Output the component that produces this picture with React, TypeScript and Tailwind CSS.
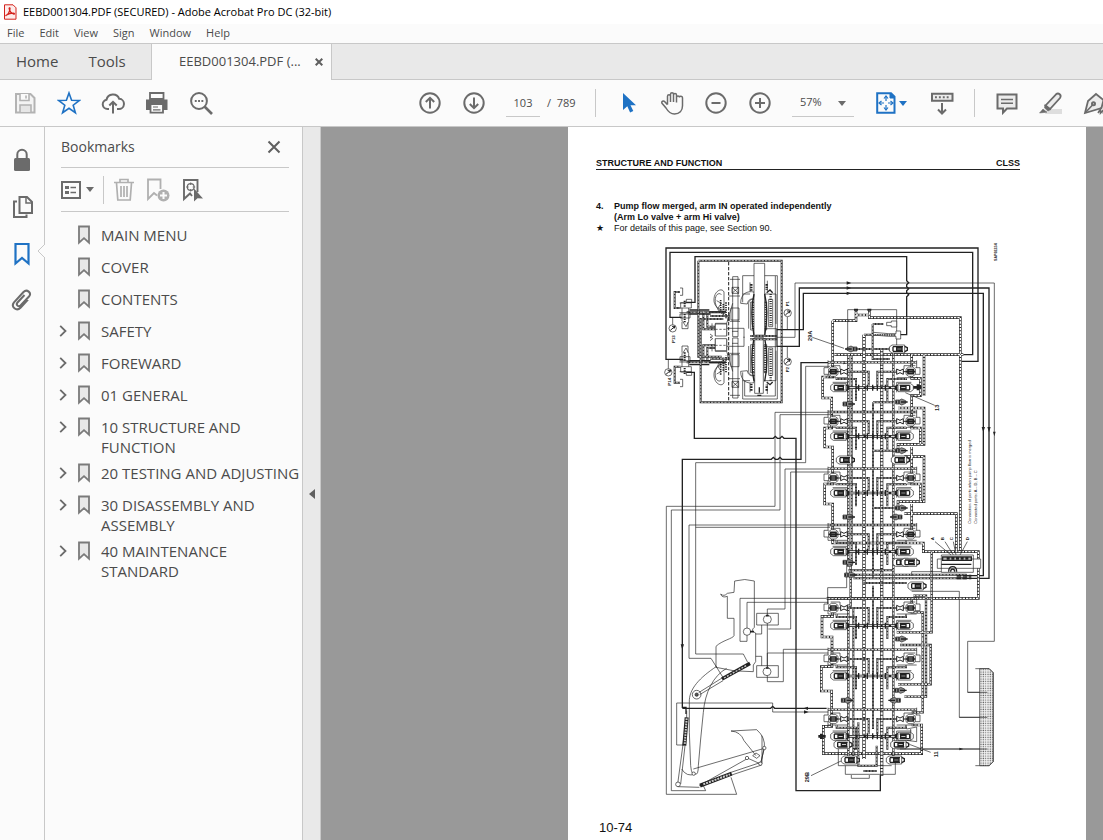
import { useState } from "react";
import type { ReactNode } from "react";

const MENUS = ["File", "Edit", "View", "Sign", "Window", "Help"];

const BOOKMARKS = [
    { title: "MAIN MENU", children: false },
    { title: "COVER", children: false },
    { title: "CONTENTS", children: false },
    { title: "SAFETY", children: true },
    { title: "FOREWARD", children: true },
    { title: "01 GENERAL", children: true },
    { title: "10 STRUCTURE AND FUNCTION", children: true },
    { title: "20 TESTING AND ADJUSTING", children: true },
    { title: "30 DISASSEMBLY AND ASSEMBLY", children: true },
    { title: "40 MAINTENANCE STANDARD", children: true },
];

function Icon({ children, className = "size-6 text-[#6b6b6b]" }: { children: ReactNode; className?: string }) {
    return (
        <svg viewBox="0 0 24 24" fill="none" stroke="currentColor" strokeWidth="2" className={`shrink-0 ${className}`} aria-hidden="true">
            {children}
        </svg>
    );
}

function ToolButton({ label, children }: { label: string; children: ReactNode }) {
    return (
        <button type="button" aria-label={label} className="flex size-8 shrink-0 items-center justify-center">
            {children}
        </button>
    );
}

function Caret({ className }: { className: string }) {
    return (
        <svg viewBox="0 0 8 5" className={`h-[5px] w-2 shrink-0 ${className}`} fill="currentColor" aria-hidden="true">
            <path d="M0 0h8L4 5z" />
        </svg>
    );
}

function Divider() {
    return <span className="h-7 w-px shrink-0 bg-[#c8c8c8]" />;
}

function TitleBar() {
    return (
        <header className="bg-white">
            <div className="flex h-6 items-center gap-[6px] pl-[3px] text-[11px] text-black">
                <svg viewBox="0 0 14 16" className="h-4 w-[14px]" fill="none" stroke="#d3221c" aria-hidden="true">
                    <path d="M1.500.8h8.500l3 3v11.400H1.500z" fill="#fdeceb" />
                    <path d="M3 11.500c2-.6 4-4.500 4-7 0-1-1-1-.8.200.5 2.600 2.400 4.800 4.600 5.300 1 .2.800-.9-.5-.9-2.500 0-5 .8-6.800 1.900-.8.500-.8.700-.5.500z" strokeWidth="1.300" />
                </svg>
                <h1>EEBD001304.PDF (SECURED) - Adobe Acrobat Pro DC (32-bit)</h1>
            </div>
            <nav className="flex h-[19px] items-center gap-[15px] bg-[#fbfbfb] pl-[7px] text-[11px] text-[#4b4b4b]">
                {MENUS.map((menu) => (
                    <button type="button" key={menu}>
                        {menu}
                    </button>
                ))}
            </nav>
        </header>
    );
}

function TabBar() {
    return (
        <div className="flex h-[37px] border-t border-[#c8c8c8] bg-[#e9e9e9] text-[#4b4b4b]">
            <div className="flex w-[152px] items-center gap-[30px] border-r border-b border-[#c8c8c8] pl-4 text-[15px]">
                <button type="button">Home</button>
                <button type="button">Tools</button>
            </div>
            <div className="flex w-[180px] items-center justify-between border-r border-[#c8c8c8] bg-[#fbfbfb] pr-2 pl-[27px]">
                <button type="button" className="text-[13px]">
                    EEBD001304.PDF (...
                </button>
                <button type="button" aria-label="Close tab">
                    <svg viewBox="0 0 8 8" className="size-2" stroke="#5f5f5f" strokeWidth="2" aria-hidden="true">
                        <path d="M.7.7l6.600 6.600M7.300.7L.7 7.300" />
                    </svg>
                </button>
            </div>
            <div className="flex-1 border-b border-[#c8c8c8]" />
        </div>
    );
}

function Toolbar() {
    const [page, setPage] = useState("103");

    return (
        <div className="flex h-[47px] items-center overflow-hidden border-b border-[#c8c8c8] bg-[#fbfbfb] pl-[9px] text-[11px] text-[#4b4b4b]">
            <div className="flex gap-3">
                <ToolButton label="Save">
                    <Icon className="size-6 text-[#b3b3b3]">
                        <path d="M3 3h14.500L21.500 7v14.500H3z" fill="#f4f4f4" />
                        <path d="M7 3v6.500h9V3M13 4.500v3" fill="#fbfbfb" strokeWidth="1.600" />
                        <path d="M7 21v-7h11v7" fill="#e6e6e6" strokeWidth="1.600" />
                    </Icon>
                </ToolButton>
                <ToolButton label="Star">
                    <Icon className="size-6 text-[#1f72c4]">
                        <path d="M12 2l2.600 7.300 7.800.2-6.200 4.700 2.200 7.500L12 17.300l-6.400 4.400 2.200-7.500-6.200-4.700 7.800-.2z" strokeWidth="1.600" />
                    </Icon>
                </ToolButton>
                <ToolButton label="Upload">
                    <Icon>
                        <path d="M8 18H6.500a4.700 4.700 0 0 1-1-9.300 6.600 6.600 0 0 1 12.700-.9A5.100 5.100 0 0 1 17.500 18H16" />
                        <path d="M12 22.500V11M8.300 14.500L12 10.800l3.700 3.700" />
                    </Icon>
                </ToolButton>
                <ToolButton label="Print">
                    <Icon>
                        <path d="M1 8.500h21.500V19H18v-4H5.500v4H1z" fill="currentColor" stroke="none" />
                        <path d="M5 2h13.500v6H5z" fill="#fbfbfb" strokeWidth="1.800" />
                        <path d="M5.500 13h12.500v8.700H5.500z" fill="#fbfbfb" strokeWidth="1.800" />
                        <path d="M8 16h5M8 18.800h7.500" strokeWidth="1.200" />
                    </Icon>
                </ToolButton>
                <ToolButton label="Find">
                    <Icon>
                        <circle cx="10" cy="10" r="7.900" />
                        <path d="M15.500 15.500l7.500 7.500" strokeWidth="2.600" />
                        <path d="M5.800 10h8.500" strokeWidth="1.900" strokeDasharray="1.900 1.400" />
                    </Icon>
                </ToolButton>
            </div>

            <div className="ml-[197px] flex gap-3">
                <ToolButton label="Previous page">
                    <Icon>
                        <circle cx="12" cy="12" r="9.700" />
                        <path d="M12 17.500V7M7.800 11L12 6.800l4.200 4.200" />
                    </Icon>
                </ToolButton>
                <ToolButton label="Next page">
                    <Icon>
                        <circle cx="12" cy="12" r="9.700" />
                        <path d="M12 6.500V17M7.800 13l4.200 4.200 4.200-4.200" />
                    </Icon>
                </ToolButton>
            </div>
            <input
                aria-label="Page number"
                value={page}
                onChange={(e) => setPage(e.target.value)}
                className="ml-4 h-7 w-[34px] shrink-0 border-b border-[#c8c8c8] bg-transparent text-center outline-none"
            />
            <span className="ml-[7px] w-12 shrink-0 whitespace-pre">/  789</span>
            <Divider />

            <div className="ml-4 flex gap-3">
                <ToolButton label="Select">
                    <Icon className="size-6 text-[#1f72c4]">
                        <path d="M7 2v17l4.300-3.700 2.800 6.200 3.200-1.500-2.800-5.800H20z" fill="currentColor" stroke="none" />
                    </Icon>
                </ToolButton>
                <ToolButton label="Hand">
                    <Icon>
                        <path
                            d="M7.500 13.500V5.200c0-2 3-2 3 0V11 3.200c0-2 3-2 3 0V11 4c0-2 3-2 3 0v7.500-5c0-2 3-2 3 0M19.500 6.500c0-2 3-1.500 3 .3v8c0 5-3 8.200-8 8.200-4.500 0-6.500-2.500-8.500-6L2 12.300c-1-2 1.500-3 2.800-1.500l2.700 3"
                            strokeWidth="1.500"
                        />
                    </Icon>
                </ToolButton>
                <ToolButton label="Zoom out">
                    <Icon>
                        <circle cx="12" cy="12" r="9.700" />
                        <path d="M7.500 12h9" />
                    </Icon>
                </ToolButton>
                <ToolButton label="Zoom in">
                    <Icon>
                        <circle cx="12" cy="12" r="9.700" />
                        <path d="M7 12h10M12 7v10" />
                    </Icon>
                </ToolButton>
            </div>
            <div className="relative ml-4 w-[62px] shrink-0">
                <select
                    aria-label="Zoom level"
                    defaultValue="57%"
                    className="h-7 w-full appearance-none border-b border-[#c8c8c8] bg-transparent pl-2 outline-none"
                >
                    <option>57%</option>
                    <option>100%</option>
                </select>
                <Caret className="pointer-events-none absolute top-3 right-2 text-[#6b6b6b]" />
            </div>
            <button type="button" aria-label="Fit page" className="ml-5 flex h-8 w-[52px] shrink-0 items-center gap-px text-[#1f72c4]">
                <Icon className="size-6 text-[#1f72c4]">
                    <path d="M3.200 2.200H17l3.500 3.500v16H3.200z" />
                    <path d="M16 2v5h5z" fill="currentColor" strokeWidth="1" />
                    <path d="M12 5.500v4.500M12 14v4.500M5.500 12H10M14 12h4.500" strokeWidth="1.200" />
                    <path d="M10 7.500l2-2.500 2 2.500M10 16.500l2 2.500 2-2.500M7.500 10L5 12l2.500 2M16.500 10l2.500 2-2.500 2" strokeWidth="1.200" />
                </Icon>
                <Caret className="text-[#1f72c4]" />
            </button>
            <ToolButton label="Scrolling">
                <Icon>
                    <path d="M2 2.700h20.500v7H2z" fill="#ececec" />
                    <path d="M5 6.200h14.500" strokeDasharray="1.900 2" />
                    <path d="M12 12v10.500M8 18.500l4 4 4-4" />
                </Icon>
            </ToolButton>
            <span className="w-4 shrink-0" />
            <Divider />
            <div className="ml-4 flex gap-3">
                <ToolButton label="Comment">
                    <Icon>
                        <path d="M2.500 3.500h19v14H12l-4 4.200v-4.200H2.500z" fill="#ececec" />
                        <path d="M6 8.500h12M6 12.300h12" strokeWidth="1.400" />
                    </Icon>
                </ToolButton>
                <ToolButton label="Highlight">
                    <Icon>
                        <path d="M8 18h15v5H6z" fill="#dedede" stroke="none" />
                        <path d="M6.500 14.500L17 3.300c2.500-2 6 .7 4 3.700L11 18z" fill="#ececec" strokeWidth="1.800" />
                        <path d="M5.800 13.500l6 5-2.800 1.500-3.500-3zM4 18l4 3.200-7.500.8z" fill="currentColor" strokeWidth=".5" />
                    </Icon>
                </ToolButton>
                <ToolButton label="Fill and sign">
                    <Icon>
                        <path d="M13 3l7.500 6-2 8L2 22 5 10z" fill="#ececec" strokeWidth="1.800" />
                        <path d="M2.500 21.500l7.500-8M15 22l2.500-4v4l3-3v4" strokeWidth="1.600" />
                        <circle cx="10.500" cy="12.800" r="1.500" />
                    </Icon>
                </ToolButton>
            </div>
        </div>
    );
}

function NavRail() {
    return (
        <nav className="flex w-[45px] shrink-0 flex-col items-center gap-[15px] border-r border-[#c8c8c8] bg-[#fbfbfb] pt-[17px]">
            <ToolButton label="Security">
                <Icon>
                    <path d="M4 11.500q0-1.500 1.500-1.500h13q1.500 0 1.500 1.500v10q0 1.500-1.500 1.500h-13Q4 23 4 21.500z" fill="currentColor" stroke="none" />
                    <path d="M7.300 11V6.500a4.700 4.700 0 0 1 9.400 0V11" />
                </Icon>
            </ToolButton>
            <ToolButton label="Pages">
                <Icon>
                    <path d="M9.500 2h7.500l5 5v11H9.500z" />
                    <path d="M16 2v6h6" strokeWidth="1.500" />
                    <path d="M7 6.500H4V22h12.500v-2.500" />
                </Icon>
            </ToolButton>
            <div className="relative flex w-full justify-center">
                <ToolButton label="Bookmarks">
                    <Icon className="size-6 text-[#1f72c4]">
                        <path d="M5.500 2h13v19.500L12 16l-6.500 5.500z" strokeWidth="2.200" />
                    </Icon>
                </ToolButton>
                <svg viewBox="0 0 8 14" className="absolute top-[6px] -right-px h-[14px] w-2" aria-hidden="true">
                    <path d="M8 0L1 7l7 7" fill="#fbfbfb" stroke="#c8c8c8" />
                </svg>
            </div>
            <ToolButton label="Attachments">
                <Icon>
                    <path d="M18 10.500l-7.500 8.300c-4 4-10-1-6.500-5.500L13.500 3c3.500-3.500 8.500 1 5.500 4.500l-8.500 9c-2 2-5-.7-3-3l7-7.500" />
                </Icon>
            </ToolButton>
        </nav>
    );
}

function BookmarkGlyph() {
    return (
        <svg viewBox="0 0 14 20" className="h-5 w-[14px] shrink-0" aria-hidden="true">
            <path d="M2 1.500h10v16.200l-5-4.500-5 4.500z" fill="#e8e8e8" stroke="#7a7a7a" strokeWidth="1.800" />
        </svg>
    );
}

function BookmarksPanel() {
    return (
        <aside className="w-[257px] shrink-0 bg-[#fbfbfb] text-[#4b4b4b]">
            <div className="mr-[13px] ml-4 flex h-[41px] items-center justify-between border-b border-[#c8c8c8] pr-2 pb-px">
                <h2 className="text-[14px]">Bookmarks</h2>
                <button type="button" aria-label="Close panel">
                    <svg viewBox="0 0 14 14" className="size-[14px]" stroke="#5f5f5f" strokeWidth="2" aria-hidden="true">
                        <path d="M1.500 1.500l11 11M12.500 1.500l-11 11" />
                    </svg>
                </button>
            </div>
            <div className="mr-[13px] ml-4 flex h-11 items-center border-b border-[#c8c8c8]">
                <button type="button" aria-label="Options" className="flex w-[42px] items-center gap-[5px] text-[#6b6b6b]">
                    <svg viewBox="0 0 20 18" className="h-[18px] w-5" fill="none" stroke="currentColor" aria-hidden="true">
                        <path d="M1 1h18v16H1z" strokeWidth="2" />
                        <path d="M4 6.500h4M4 11.500h4" strokeWidth="3" />
                        <path d="M9.500 6.500H15M9.500 11.500H15" strokeWidth="1.600" />
                    </svg>
                    <Caret className="text-[#6b6b6b]" />
                </button>
                <Divider />
                <div className="ml-1 flex gap-[2px]">
                    <ToolButton label="Delete">
                        <Icon className="size-6 text-[#b0b0b0]">
                            <path d="M2 4.500h20M8 4V1.500h8V4M4.500 5l1.300 17h12.400l1.300-17M9 8v11M12 8v11M15 8v11" strokeWidth="1.700" />
                        </Icon>
                    </ToolButton>
                    <ToolButton label="New bookmark">
                        <Icon className="size-6 text-[#b0b0b0]">
                            <path d="M11 17.500L8 15l-6 6V1.500h12.500V11" strokeWidth="1.800" />
                            <circle cx="17.500" cy="17.500" r="6" fill="currentColor" stroke="none" />
                            <path d="M17.500 14v7M14 17.500h7" stroke="#fbfbfb" />
                        </Icon>
                    </ToolButton>
                    <ToolButton label="Find bookmark">
                        <Icon>
                            <path d="M12 18l-2-2.500-6 5.500V2h13.500v12" strokeWidth="1.900" />
                            <circle cx="10.700" cy="9" r="3.400" strokeWidth="1.200" />
                            <path d="M10.700 4.500v2.500M10.700 11v2.500M6.200 9h2.500M12.700 9h2.500" strokeWidth="1.100" />
                            <path d="M14 10.500v13l3.500-3.300 5.500.3z" fill="currentColor" stroke="none" />
                        </Icon>
                    </ToolButton>
                </div>
            </div>
            <ul className="pt-[10px] pl-3 text-[15px] leading-5">
                {BOOKMARKS.map((item) => (
                    <li key={item.title} className="flex min-h-8 items-start py-[3px]">
                        <div className="w-5 shrink-0">
                            {item.children && (
                                <button type="button" aria-label={`Expand ${item.title}`} className="flex h-5 w-3 items-center justify-center">
                                    <svg viewBox="0 0 8 12" className="h-3 w-2" fill="none" stroke="#6b6b6b" strokeWidth="1.800" aria-hidden="true">
                                        <path d="M1.200.8L6.500 6l-5.300 5.200" />
                                    </svg>
                                </button>
                            )}
                        </div>
                        <BookmarkGlyph />
                        <a href="#page" className="ml-[10px]">
                            {item.title}
                        </a>
                    </li>
                ))}
            </ul>
        </aside>
    );
}

// Pilot line or oil passage: dark casing with a broken light core.
function Pipe({ d, w = 8 }: { d: string; w?: number }) {
    return (
        <g fill="none">
            <path d={d} stroke="#2a2a2a" strokeWidth={w} />
            <path d={d} stroke="#fff" strokeWidth={w - 4} strokeDasharray="7 3" />
        </g>
    );
}

function Capsule({ x, y }: { x: number; y: number }) {
    return (
        <g transform={`translate(${x} ${y})`}>
            <path d="M-26-6l8-6h38v24h-38l-8-6z" fill="#fff" />
            <path d="M-15-7h30M-15 7h30M-15-7v14M-4-3h16v6H-4zM20-8l8 4v8l-8 4" strokeWidth="4" />
        </g>
    );
}

function Horn({ x, y, flip }: { x: number; y: number; flip?: boolean }) {
    return (
        <g transform={`translate(${x} ${y}) scale(${flip ? -1 : 1} 1)`}>
            <path d="M-16-6h12l6-3 12 5v8L2 9l-6-3h-12z" fill="#888" />
            <path d="M-14-4v8M-6-5v10M0 0H20" strokeWidth="4" />
        </g>
    );
}

function PortHalf() {
    return (
        <g>
            <path d="M86-12H72V8h14M86-8l8-6h12l8 6v16l-8 6H94l-8-6z" fill="#fff" />
            <path d="M86 0h28M92-6h16v12H92z" strokeWidth="5" />
            <path d="M114 0h8M122-8l10 5 10-5V8l-10-5-10 5z" fill="#fff" strokeWidth="3" />
        </g>
    );
}

// One spool section: pilot ports on top, the spool itself `gap` units lower.
function Section({ y, gap }: { y: number; gap: number }) {
    return (
        <g transform={`translate(2400 ${y})`}>
            <Pipe d="M84-28H350" w={7} />
            <path d="M84-34V18M350-34V-6M92-18h28v10M346-18h-34v10M84 18h60M350 18h-60" />
            <Pipe d={`M144 0H206V${gap - 6}M290 0H232V${gap - 6}`} w={6} />
            <Pipe d={`M110 18V${gap - 26}H168V${gap + 40}M318 18V${gap - 26}H262V${gap + 40}`} w={6} />
            <PortHalf />
            <g transform="translate(432 0) scale(-1 1)">
                <PortHalf />
            </g>
            <path d={`M98 ${gap - 16}h44v30M334 ${gap - 16}h-44v30`} />
            <path d={`M140 ${gap}H292`} strokeWidth="8" />
            <path d={`M148 ${gap}H288`} stroke="#fff" strokeWidth="3" strokeDasharray="18 7" />
            <path d={`M176 ${gap - 9}v18M202 ${gap - 9}v18M218 ${gap - 9}v18M232 ${gap - 9}v18M256 ${gap - 9}v18`} strokeWidth="4" />
            <Capsule x={118} y={gap} />
            <g transform="translate(432 0) scale(-1 1)">
                <Capsule x={118} y={gap} />
            </g>
        </g>
    );
}

function Gauge({ x, y }: { x: number; y: number }) {
    return (
        <g transform={`translate(${x} ${y})`}>
            <circle r="11" fill="#fff" />
            <path d="M-7 6L7-6M-2-6l9 0-3 7" strokeWidth="3" />
        </g>
    );
}

// One pump; the second is the same drawing mirrored below the shaft centre.
function Pump() {
    return (
        <g>
            <path d="M282 312V283H230M230 305V268H196v38M230 268l18-60M248 205V128h16v180h-16V205M243 222h24v36h-24zM240 136h30M236 186h34M240 262h30M246 292h18" />
            <path d="M246 160h20v18h-20zM246 160l20 18M266 160l-20 18" />
            <path d="M278 205v-80h104v185M300 145v28M352 140v32M278 180h22M342 180h36v90" />
            <path d="M272 208c0-30 20-38 40-34l6 22c-14-4-24 0-26 14zM296 208c0-10 10-14 20-12" />
            <path d="M296 208v76M302 204h14v84h-14zM342 204h8v84h-8zM356 196h12v82h-12z" />
            <path d="M309 205v82M346 205v82M362 180v98" strokeWidth="7" strokeDasharray="3 4" />
            <path d="M304 150v20M350 150v18" strokeWidth="7" strokeDasharray="5 3" />
            <path d="M350 176l10-8 8 8" strokeWidth="4" />
            <path d="M216 240c-10-20-26-22-24-46 2-24 24-34 30-20M208 236c-8-20-14-24-12-42 2-16 14-18 18-12M222 174v66M200 200l14 8-10 14 14 8" />
            <path d="M212 198v42M220 210v40M228 205v50" strokeWidth="5" strokeDasharray="4 3" />
            <Pipe d="M110 235H228M172 240V278H196M160 232V286H196M180 246H236V262" w={6} />
            <path d="M118 228h60M118 240h64M178 234h50" strokeWidth="4" />
            <path d="M180 300l8 6-8 6M186 268v20" />
            <path d="M89 207h20V196h16v10h-16M92 206h32v16H92zM96 222v40M116 222v40M88 236h36M90 252h30v-12H90zM98 262l10 16 8-16M96 264v20h18v-20" />
            <path d="M104 200v18M104 240v28" strokeWidth="6" strokeDasharray="4 3" />
            <Pipe d="M92 222H74V174H90" w={6} />
            <path d="M90 162h8v22h-8" />
        </g>
    );
}

function HydraulicDiagram() {
    return (
        <svg
            viewBox="1965 705 1050 1710"
            className="ml-[59px] h-[570px] w-[350px]"
            fill="none"
            stroke="#222"
            strokeWidth="2"
            role="img"
            aria-label="Hydraulic circuit with main pump, control valve and work equipment"
        >
            <defs>
                <pattern id="tank-dots" width="7" height="7" patternUnits="userSpaceOnUse">
                    <rect width="7" height="7" fill="#f2f2f2" stroke="none" />
                    <circle cx="3" cy="3" r="2" fill="#666" stroke="none" />
                </pattern>
            </defs>

            {/* main pumps */}
            <g transform="translate(1950 705)">
                <Pump />
                <g transform="translate(0 620) scale(1 -1)">
                    <Pump />
                </g>
                <path d="M196 270h34v36h-34zM196 314h34v36h-34z" fill="#fff" />
                <path d="M196 286h36M196 334h36" strokeDasharray="7 5" />
                <path d="M312 88h32v218h-32zM314 310h26v168h-26z" fill="#fff" />
                <path d="M312 180c-10 40-6 90 0 126M344 180c10 40 6 90 0 126M312 312c-8 40-8 90 0 130M344 312c8 40 8 90 0 130" strokeWidth="4" />
                <path d="M316 304h26M328 460v16M322 484h12" strokeWidth="4" />
                <Pipe d="M145 80H395V505H152V255H220M145 80V368H215M300 306H380M300 316H380" w={6} />
                <path d="M236 84V505" strokeWidth="3" strokeDasharray="10 5" />
                <path d="M344 284h36v54h-36M380 310H435V147M376 126V486H284V440" />
                <path d="M412 249v38M412 337v34M68 250v22M55 376v28" />
                <Gauge x={413} y={237} />
                <Gauge x={413} y={383} />
                <Gauge x={68} y={283} />
                <Gauge x={55} y={415} />
            </g>

            {/* pump delivery and tank return lines */}
            <g strokeWidth="4">
                <path d="M2050 1081H1998V747H2934V1087H2885" />
                <path d="M2045 955H2010V760H2918V1067H2870" />
                <path d="M2060 910H2085V773H2720V845l6 6-6 6v6l6 6-6 6v6l6 6-6 6V1007H2700" />
                <path d="M2060 1120H2083V1318H2320l6-6 6 6h8l6-6 6 6H2388V2375H2641V2328" />
                <path d="M2330 992H2410V883H2950V1730H2895" />
                <path d="M2330 1042H2398V867H2967V1738H2895" />
                <path d="M2490 1091H2403V1381H2346l-6-6-6 6h-8l-6-6-6 6H2047V2125H2058V2145" />
                <path d="M2480 2128H2324l-6-6-6 6H2047" />
            </g>
            <path d="M2385 852H2983V1927H2903V2080H2962M2790 1777H2878V2155H2962M2690 2250H2962" />
            <path d="M2490 1102H2417V1391H2087V1965H2230L2243 1990" />
            <path d="M2490 1240H2325V1522H1999V2386H2210L2193 2335" />
            <path d="M2490 1247H2340V1533H2014V2375H2117L2110 2360" />
            <path d="M2490 1410H2355V1830H2302V1850M2490 1419H2372V1890H2305" />
            <path d="M2490 1578H2067V1978H2133L2172 2040M2490 1585H2087" />
            <path d="M2485 1798H2220V1927H2241V1908M2485 1810H2241V1888" />
            <path d="M2485 1951H2350V2048H2302V2030M2485 1962H2302V2006M2302 1870V2006" />
            <path d="M2485 2139H2318V2112H2030V2238H2050" />
            <path
                d="M2424 2123v10l-14-5zM2412 2134v10l14-5zM2530 1086v10l14-5zM2540 878v10l14-5zM2540 862v10l14-5zM2540 847v10l14-5zM2042 1936h10l-5 16zM2945 1284h10l-5 16zM2962 1284h10l-5 16zM2979 1298h8l-4 14zM2560 2246v8l12-4zM2878 2246v8l12-4z"
                fill="#222"
                stroke="none"
            />

            {/* control valve body */}
            <Pipe d="M2498 965H2568V930M2608 930V956H2881V1660M2503 1067H2890M2568 948H2608" />
            <Pipe d="M2498 965V1134H2468V1197H2495V1287H2474V1344H2498V1455H2474V1515H2498V1632H2770V1658H2935V1798H2480" />
            <Pipe d="M2498 1840V1852H2466V1914H2496V2003H2464V2076H2495V2182H2470V2264H2765V2178H2735" />
            <Pipe d="M2735 1067V1138H2761V1190H2735V1287H2761V1334M2772 1067V1190M2694 1227H2772V1336H2694V1356M2713 1373H2772V1508H2694V1526M2713 1544H2869V1656M2735 1344V1455H2761V1508M2735 1515V1600" />
            <Pipe d="M2795 1658V1900H2690M2735 1798V1840H2768V1920M2768 1920V2140H2735M2694 2056H2792V1938H2700M2713 2093H2778V1790H2740" w={7} />
            <Pipe d="M2545 1070V1700H2552V1820H2545V2290" w={7} />
            <Pipe d="M2555 1070V1700M2560 1830V2280" w={6} />
            <Pipe d="M2592 1007V2280" w={10} />
            <Pipe d="M2645 1050V2330" w={10} />
            <Pipe d="M2680 1050V2290" w={7} />
            <Pipe d="M2592 1007H2640M2618 975V1080H2670M2540 1050H2700M2618 975H2650M2619 1210H2680M2619 1210V1740M2619 1760V2190M2619 1355H2690M2619 1527H2690" w={6} />
            <Pipe d="M2560 1727H2900M2560 1738H2900M2590 1752H2720M2545 1714H2680" w={6} />
            <path d="M2543 932H2690V1050M2543 932V1050M2483 1766H2540V1690M2483 1766V1820M2735 1777H2790M2735 1730V1718H2850" />

            {/* plugs around the top cover */}
            <path d="M2620 1000l46 4h22v-8h14v24h-14v-8h-22l-46-4zM2660 970h14v-4h16v18h-16v-4h-14z" fill="#fff" />
            <path d="M2624 1008h64" stroke="#555" strokeWidth="6" strokeDasharray="5 2" />
            <path d="M2562 932h12M2602 932h12" strokeWidth="6" />
            <Horn x={2555} y={1050} flip />
            <Horn x={2685} y={1050} />
            <Capsule x={2694} y={1050} />

            {[
                [1118, 48],
                [1267, 45],
                [1437, 45],
                [1606, 52],
                [1827, 53],
                [1980, 51],
                [2160, 52],
            ].map(([y, gap]) => (
                <Section key={y} y={y} gap={gap} />
            ))}

            <Horn x={2545} y={1215} />
            <Horn x={2703} y={1209} />
            <Horn x={2703} y={1355} />
            <Horn x={2703} y={1527} />
            <Horn x={2545} y={1554} />
            <Horn x={2690} y={1554} flip />
            <Horn x={2545} y={1690} />
            <Horn x={2550} y={1728} />
            <Horn x={2703} y={1920} />
            <Horn x={2700} y={2074} />
            <Horn x={2540} y={2104} />
            <Horn x={2685} y={2104} flip />
            <Capsule x={2535} y={1383} />
            <Capsule x={2700} y={1383} />
            <Capsule x={2705} y={1690} />
            <Capsule x={2730} y={1690} />
            <Capsule x={2750} y={1761} />
            <Capsule x={2528} y={2237} />
            <Capsule x={2698} y={2237} />
            <Capsule x={2550} y={2283} />
            <Capsule x={2685} y={2283} />
            <path d="M2740 1165h24M2754 1156v18M2455 2212h22M2464 2204v16" strokeWidth="8" />
            <path d="M2536 2300v26h150v-40M2554 2328v10h54v-10M2515 2250v50h160M2720 2190l30-6v44l-30-4M2732 2190v34" />
            <Pipe d="M2575 2170V2300H2630V2240M2590 2316H2630" w={6} />

            {/* merge-divider valve */}
            <path d="M2812 1680h130v28h-130zM2824 1668h96v52h-96z" fill="#fff" />
            <path d="M2828 1674h86v10h-86zM2824 1696h90" strokeWidth="4" />
            <path d="M2840 1678h66" strokeWidth="8" strokeDasharray="9 5" />
            <path d="M2846 1718c0-20 24-20 24 0M2852 1718c0-10 12-10 12 0" strokeWidth="4" />
            <path d="M2870 1730h44M2870 1738h44" strokeWidth="6" strokeDasharray="14 4" />
            <path d="M2805 1628l48 40M2835 1628l25 40M2860 1628l8 40M2902 1628l-22 40" />

            {/* oil tank */}
            <path d="M2926 2009h42l12 12v267l-12 12h-42" />
            <path d="M2939 2009h28l12 12v267l-12 12h-28z" fill="url(#tank-dots)" />
            <path d="M2903 2080H2962M2878 2155H2962M2700 2250H2962" />

            {/* excavator */}
            <g transform="translate(1950 1680)">
                <path d="M198 325V262C215 245 250 238 252 230V178H232V112Q216 118 212 105 222 114 232 103L252 100 254 66Q285 57 313 66V205Q300 215 317 222V308L310 318V338Q255 340 198 325z" />
                <path d="M200 322C150 355 116 390 118 430V520L122 620Q125 652 135 645 145 650 145 620L152 540 160 460C165 400 190 350 230 328" />
                <circle cx="140" cy="407" r="13" />
                <circle cx="140" cy="407" r="5" fill="#555" />
                <path d="M146 401l70-44M149 407l70-42" />
                <path d="M216 360l84-47" strokeWidth="11" />
                <path d="M222 357l68-38" stroke="#ccc" strokeWidth="4" strokeDasharray="6 4" />
                <path d="M110 455v20L83 675M105 560L92 675M95 630Q110 655 135 645M130 630L343 568M83 683l65 2M148 680L290 600M245 648l90-30M243 640l90-30" />
                <path d="M110 475l-7 85" strokeWidth="12" />
                <path d="M110 478l-6 78" stroke="#ccc" strokeWidth="6" strokeDasharray="5 3" />
                <path d="M150 680l95-36" strokeWidth="12" />
                <path d="M160 676l80-30" stroke="#ccc" strokeWidth="6" strokeDasharray="6 3" />
                <circle cx="84" cy="676" r="7" fill="#fff" />
                <circle cx="131" cy="644" r="5" fill="#fff" />
                <path d="M243 516L320 512Q347 535 343 568L331 616M336 530v84M243 516Q272 518 282 545L318 590M292 597l40 18 10-46M308 590l10-8 12 8-10 8z" />
                <circle cx="291" cy="597" r="5" fill="#fff" />
                <circle cx="343" cy="567" r="5" fill="#fff" />
                <circle cx="331" cy="614" r="5" fill="#fff" />
                <path d="M320 163h65v35h-65zM320 320h65v35h-65zM317 225h18v-27M317 292h18v28" />
                <g fill="#fff">
                    <circle cx="291" cy="218" r="11" />
                    <circle cx="352" cy="181" r="12" />
                    <circle cx="351" cy="338" r="12" />
                </g>
                <path d="M300 218h12M348 170h8M348 327h8" strokeWidth="5" />
            </g>

            {/* callouts */}
            <path d="M2437 1015l95 33M2804 1219l-88-38M2433 2330l90-44M2792 2260l-64-24" />
            <g fill="#1c1c1c" stroke="none" fontFamily="Liberation Sans, sans-serif" fontWeight="700" fontSize="13">
                <text transform="translate(2991 786) rotate(-90)" fontSize="11">SAP02234</text>
                <text transform="translate(2368 922) rotate(-90)">P1</text>
                <text transform="translate(2368 1120) rotate(-90)">P2</text>
                <text transform="translate(2024 1032) rotate(-90)">P13</text>
                <text transform="translate(2012 1160) rotate(-90)">P14</text>
                <g fontSize="17">
                    <text transform="translate(2435 1026) rotate(-90)">29A</text>
                    <text transform="translate(2817 1236) rotate(-90)">13</text>
                    <text transform="translate(2426 2350) rotate(-90)">29B</text>
                    <text transform="translate(2814 2275) rotate(-90)">11</text>
                </g>
                <text transform="translate(2802 1624) rotate(-90)">A</text>
                <text transform="translate(2832 1624) rotate(-90)">B</text>
                <text transform="translate(2858 1624) rotate(-90)">C</text>
                <text transform="translate(2908 1624) rotate(-90)">D</text>
                <g fontWeight="400" fontSize="12">
                    <text transform="translate(2914 1574) rotate(-90)">Connection of ports when pump flow is merged</text>
                    <text transform="translate(2930 1574) rotate(-90)">Connected ports: A – D, B – C</text>
                </g>
            </g>
        </svg>
    );
}

function DocumentPage() {
    return (
        <main id="page" className="flex min-w-0 flex-1 justify-end overflow-hidden bg-[#999] pr-[17px]">
            <article className="h-[900px] w-[518px] shrink-0 bg-white pt-[31px] pr-[66px] pl-7 font-['Liberation_Sans',Arial,sans-serif] text-[9px] leading-[11px] text-[#111]">
                <div className="flex items-center justify-between border-b border-[#222] font-bold">
                    <span>STRUCTURE AND FUNCTION</span>
                    <span>CLSS</span>
                </div>
                <div className="mt-[31px] grid grid-cols-[18px_1fr]">
                    <span className="font-bold">4.</span>
                    <h3 className="font-bold">
                        Pump flow merged, arm IN operated independently
                        <br />
                        (Arm Lo valve + arm Hi valve)
                    </h3>
                    <span>★</span>
                    <p>For details of this page, see Section 90.</p>
                </div>
                <HydraulicDiagram />
                <p className="mt-4 pl-[3px] text-[13px] leading-4">10-74</p>
            </article>
        </main>
    );
}

export default function App() {
    return (
        <div className="flex h-screen flex-col overflow-hidden bg-[#fbfbfb] font-['Open_Sans','Noto_Sans',sans-serif]">
            <TitleBar />
            <TabBar />
            <Toolbar />
            <div className="flex min-h-0 flex-1">
                <NavRail />
                <BookmarksPanel />
                <button
                    type="button"
                    aria-label="Collapse panel"
                    className="flex w-[19px] shrink-0 items-center justify-center border-r border-l border-[#c8c8c8] bg-[#e9e9e9] pt-5"
                >
                    <svg viewBox="0 0 6 10" className="h-[10px] w-[6px]" fill="#5f5f5f" aria-hidden="true">
                        <path d="M6 0v10L0 5z" />
                    </svg>
                </button>
                <DocumentPage />
            </div>
        </div>
    );
}
